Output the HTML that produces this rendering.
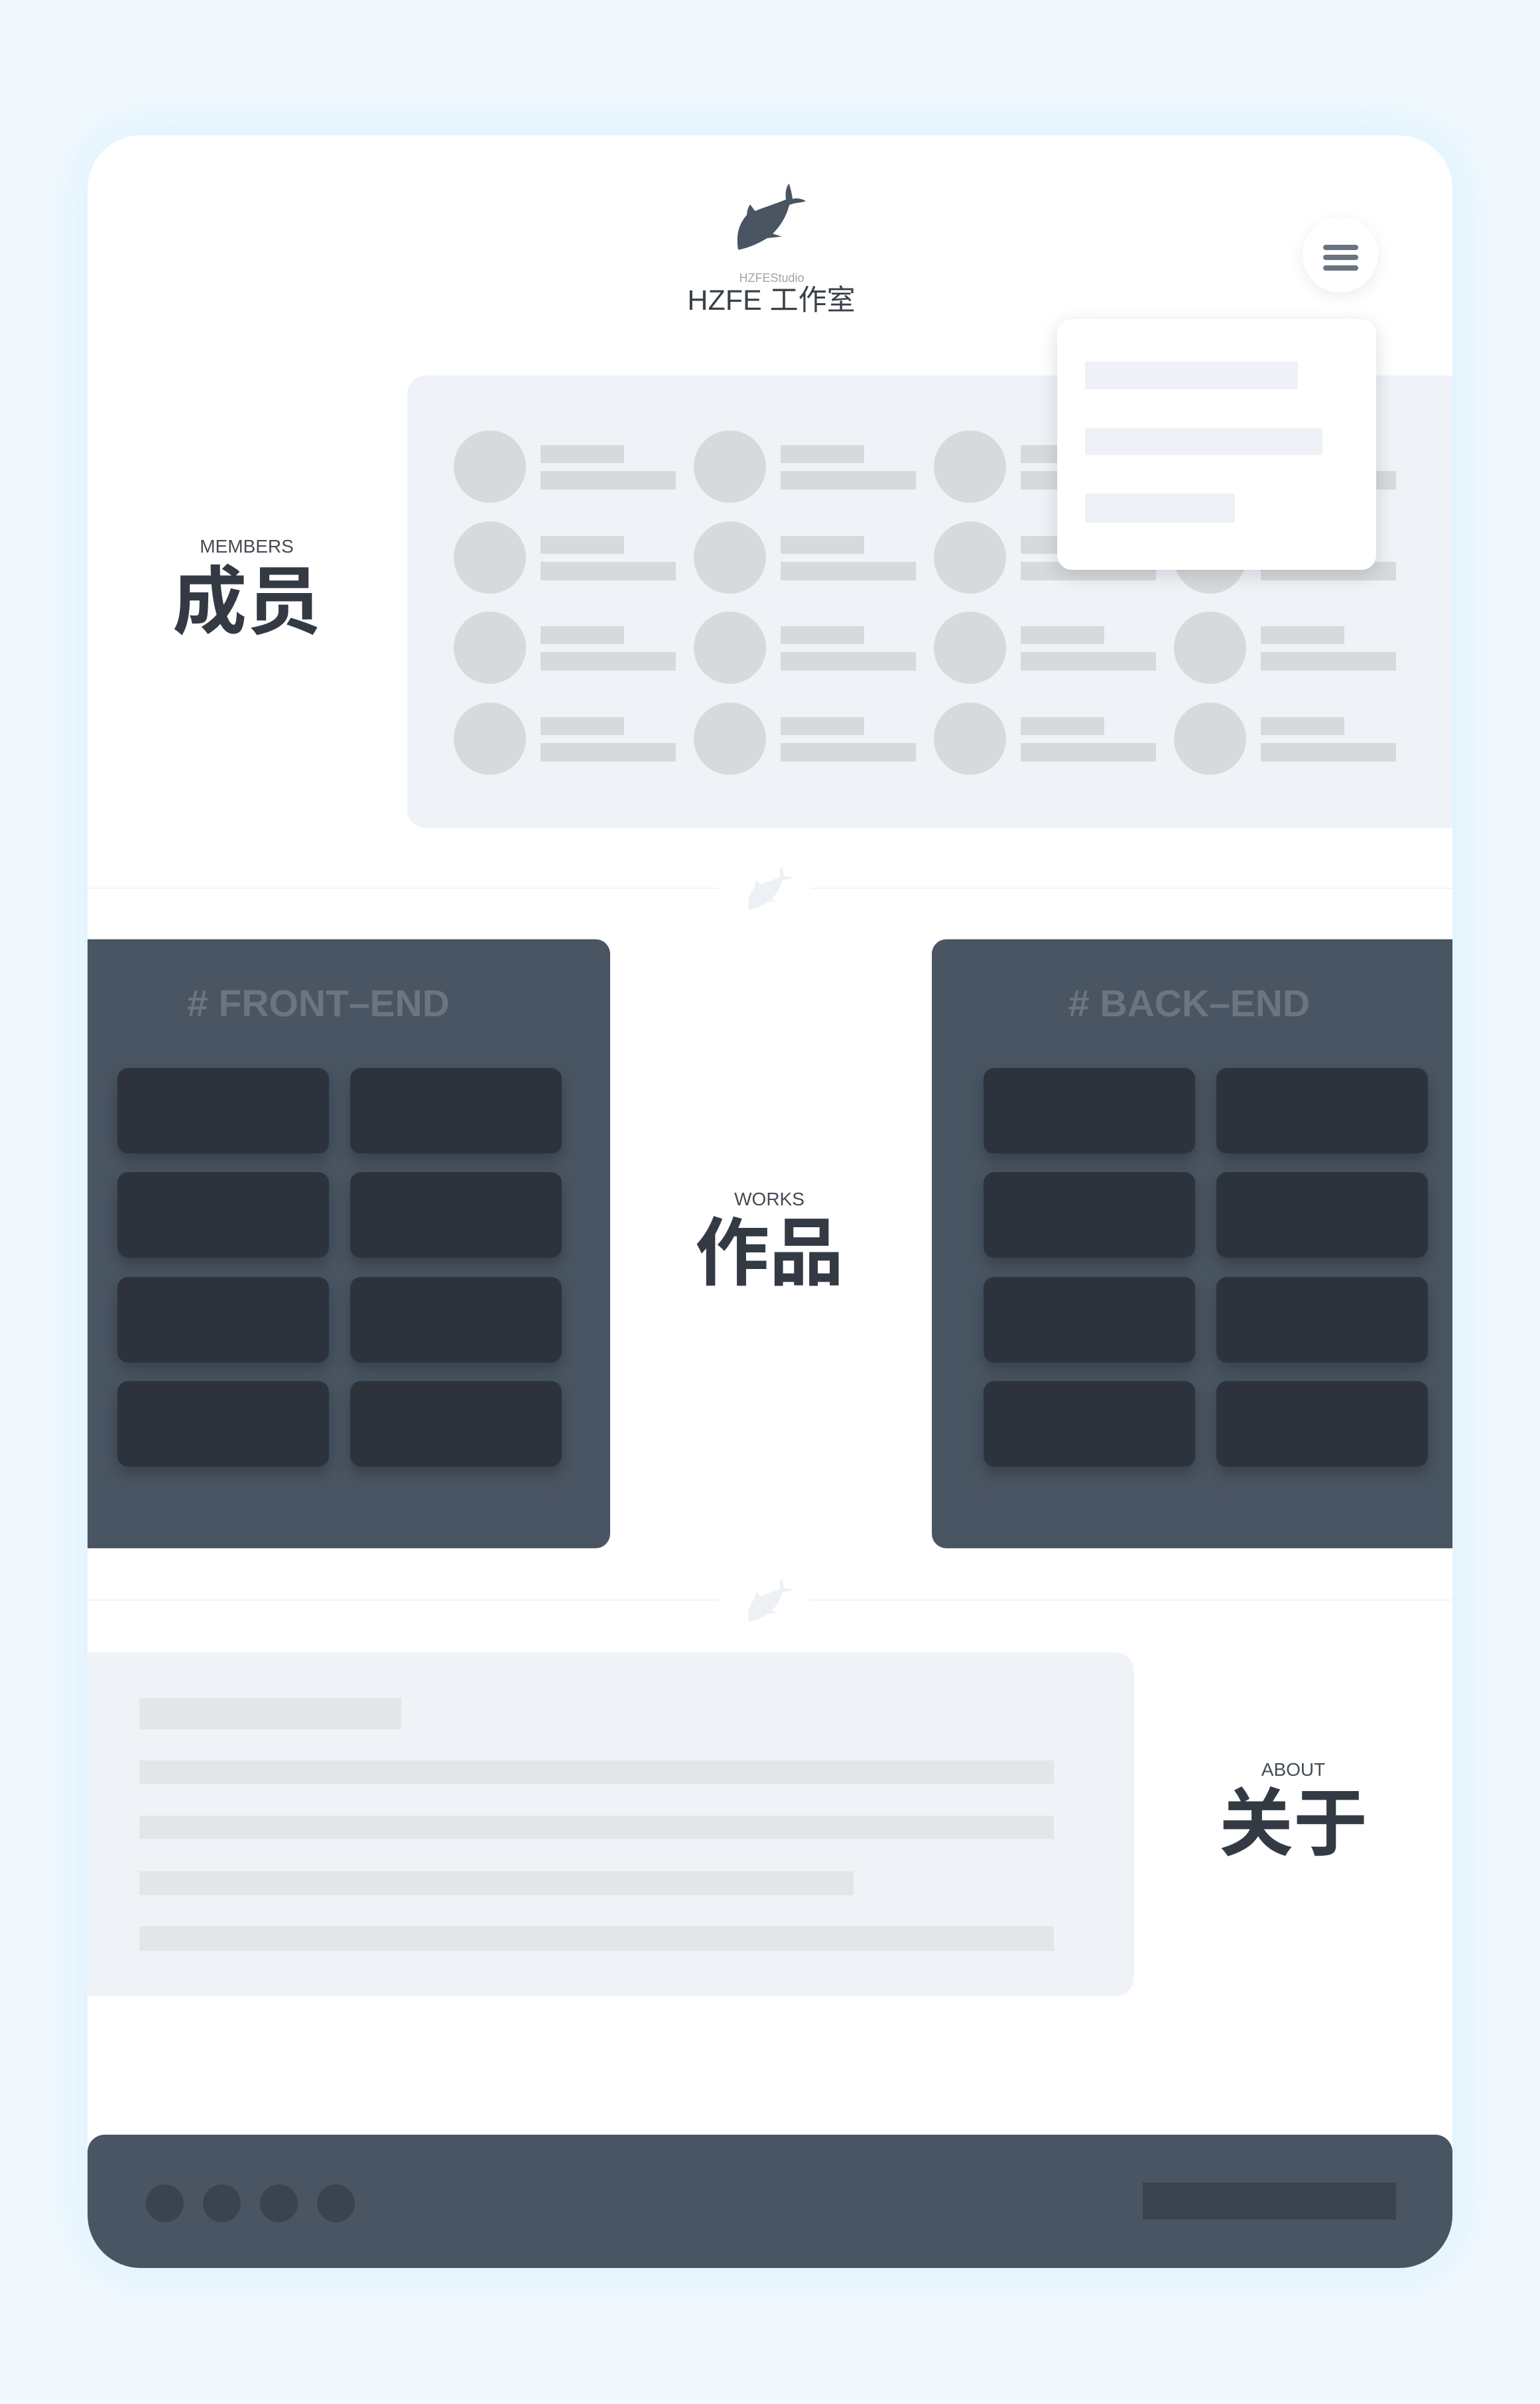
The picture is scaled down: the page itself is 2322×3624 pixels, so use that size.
<!DOCTYPE html>
<html><head><meta charset="utf-8">
<style>
*{margin:0;padding:0;box-sizing:border-box}
html,body{width:2322px;height:3624px;overflow:hidden;background:#f2f9fe;font-family:"Liberation Sans","Noto Sans CJK SC",sans-serif}
.abs{position:absolute}
.card{position:absolute;left:132px;top:204px;width:2058px;height:3215px;background:#fff;border-radius:80px;overflow:hidden;box-shadow:0 0 70px 20px rgba(214,239,255,.7)}
.t{position:absolute;line-height:1;white-space:nowrap}
.circ{position:absolute;width:109px;height:109px;border-radius:50%;background:#d7dadd}
.bar{position:absolute;background:#d7dadd}
.tile{position:absolute;width:319px;height:129px;border-radius:16px;background:#2d333c;box-shadow:0 10px 22px rgba(20,25,32,.35)}
.lbl{font-size:28px;color:#454b54;font-weight:300}
</style></head><body>
<div class="card">
<svg class="abs" style="left:978px;top:70px" width="107" height="105" viewBox="330 100 320 315">
<path fill="#4a5563" d="M340,408 C380,400 420,385 470,355 L535,348 C520,342 505,338 495,335 C530,300 555,260 570,205 C590,195 620,195 645,188 C625,175 600,172 585,178 C580,150 575,125 568,108 C555,125 550,155 555,180 C520,195 460,215 415,232 L393,203 C383,215 378,235 378,250 C350,280 335,320 335,360 C335,385 336,400 340,408 Z"/>
</svg>
<div class="t" style="left:958px;top:206px;width:147px;text-align:center;font-size:18px;color:#a0a4a9">HZFEStudio</div>
<div class="t" style="left:896px;top:228px;width:270px;text-align:center;font-size:43px;color:#3a4049">HZFE 工作室</div>
<div class="abs" style="left:1832px;top:123px;width:114px;height:114px;border-radius:50%;background:#fff;box-shadow:0 6px 24px rgba(0,0,0,.08)"></div>
<div class="abs" style="left:1863px;top:165px;width:53px;height:8px;border-radius:4px;background:#6b7580"></div>
<div class="abs" style="left:1863px;top:180px;width:53px;height:8px;border-radius:4px;background:#6b7580"></div>
<div class="abs" style="left:1863px;top:196px;width:53px;height:8px;border-radius:4px;background:#6b7580"></div>

<div class="t lbl" style="left:140px;top:606px;width:200px;text-align:center">MEMBERS</div>
<div class="t" style="left:110px;top:648px;width:260px;text-align:center;font-size:112px;font-weight:bold;color:#333a44">成员</div>
<div class="abs" style="left:482px;top:362px;width:1700px;height:682px;background:#eff2f7;border-radius:28px 0 0 28px"></div>

<div class="abs" style="left:0;top:1134px;width:951px;height:2px;background:#f1f3f6"></div>
<div class="abs" style="left:1090px;top:1134px;width:968px;height:2px;background:#f1f3f6"></div>
<svg class="abs" style="left:995px;top:1101px" width="70" height="68" viewBox="330 100 320 315"><path fill="#edf0f4" d="M340,408 C380,400 420,385 470,355 L535,348 C520,342 505,338 495,335 C530,300 555,260 570,205 C590,195 620,195 645,188 C625,175 600,172 585,178 C580,150 575,125 568,108 C555,125 550,155 555,180 C520,195 460,215 415,232 L393,203 C383,215 378,235 378,250 C350,280 335,320 335,360 C335,385 336,400 340,408 Z"/></svg>

<div class="abs" style="left:0;top:1212px;width:788px;height:918px;background:#4a5563;border-radius:0 22px 22px 0"></div>
<div class="t" style="left:150px;top:1281px;width:420px;font-size:57px;font-weight:bold;color:#6b7580">#&nbsp;FRONT–END</div>
<div class="tile" style="left:45px;top:1406px"></div><div class="tile" style="left:396px;top:1406px"></div>
<div class="tile" style="left:45px;top:1563px"></div><div class="tile" style="left:396px;top:1563px"></div>
<div class="tile" style="left:45px;top:1721px"></div><div class="tile" style="left:396px;top:1721px"></div>
<div class="tile" style="left:45px;top:1878px"></div><div class="tile" style="left:396px;top:1878px"></div>

<div class="abs" style="left:1273px;top:1212px;width:785px;height:918px;background:#4a5563;border-radius:22px 0 0 22px"></div>
<div class="t" style="left:1451px;top:1281px;width:420px;text-align:center;font-size:57px;font-weight:bold;color:#6b7580">#&nbsp;BACK–END</div>
<div class="tile" style="left:1351px;top:1406px"></div><div class="tile" style="left:1702px;top:1406px"></div>
<div class="tile" style="left:1351px;top:1563px"></div><div class="tile" style="left:1702px;top:1563px"></div>
<div class="tile" style="left:1351px;top:1721px"></div><div class="tile" style="left:1702px;top:1721px"></div>
<div class="tile" style="left:1351px;top:1878px"></div><div class="tile" style="left:1702px;top:1878px"></div>

<div class="t lbl" style="left:928px;top:1590px;width:200px;text-align:center">WORKS</div>
<div class="t" style="left:898px;top:1630px;width:260px;text-align:center;font-size:112px;font-weight:bold;color:#333a44">作品</div>

<div class="abs" style="left:0;top:2207px;width:951px;height:2px;background:#f1f3f6"></div>
<div class="abs" style="left:1090px;top:2207px;width:968px;height:2px;background:#f1f3f6"></div>
<svg class="abs" style="left:995px;top:2174px" width="70" height="68" viewBox="330 100 320 315"><path fill="#edf0f4" d="M340,408 C380,400 420,385 470,355 L535,348 C520,342 505,338 495,335 C530,300 555,260 570,205 C590,195 620,195 645,188 C625,175 600,172 585,178 C580,150 575,125 568,108 C555,125 550,155 555,180 C520,195 460,215 415,232 L393,203 C383,215 378,235 378,250 C350,280 335,320 335,360 C335,385 336,400 340,408 Z"/></svg>

<div class="abs" style="left:0;top:2287px;width:1578px;height:518px;background:#eff2f7;border-radius:0 28px 28px 0"></div>
<div class="abs" style="left:78px;top:2356px;width:395px;height:47px;background:#e2e6e9"></div>
<div class="abs" style="left:78px;top:2450px;width:1379px;height:35px;background:#e2e6e9"></div>
<div class="abs" style="left:78px;top:2533px;width:1379px;height:35px;background:#e2e6e9"></div>
<div class="abs" style="left:78px;top:2617px;width:1077px;height:36px;background:#e2e6e9"></div>
<div class="abs" style="left:78px;top:2700px;width:1379px;height:37px;background:#e2e6e9"></div>
<div class="t lbl" style="left:1718px;top:2450px;width:200px;text-align:center">ABOUT</div>
<div class="t" style="left:1688px;top:2490px;width:260px;text-align:center;font-size:112px;font-weight:bold;color:#333a44">关于</div>

<div class="abs" style="left:0;top:3014px;width:2058px;height:201px;background:#4a5563;border-radius:26px 26px 0 0"></div>
<div class="abs" style="left:88px;top:3089px;width:57px;height:57px;border-radius:50%;background:#3a434e"></div>
<div class="abs" style="left:174px;top:3089px;width:57px;height:57px;border-radius:50%;background:#3a434e"></div>
<div class="abs" style="left:260px;top:3089px;width:57px;height:57px;border-radius:50%;background:#3a434e"></div>
<div class="abs" style="left:346px;top:3089px;width:57px;height:57px;border-radius:50%;background:#3a434e"></div>
<div class="abs" style="left:1591px;top:3086px;width:382px;height:56px;background:#3a434e"></div>

<div class="circ" style="left:552px;top:445px"></div><div class="bar" style="left:683px;top:467px;width:126px;height:27px"></div><div class="bar" style="left:683px;top:506px;width:204px;height:28px"></div>
<div class="circ" style="left:914px;top:445px"></div><div class="bar" style="left:1045px;top:467px;width:126px;height:27px"></div><div class="bar" style="left:1045px;top:506px;width:204px;height:28px"></div>
<div class="circ" style="left:1276px;top:445px"></div><div class="bar" style="left:1407px;top:467px;width:126px;height:27px"></div><div class="bar" style="left:1407px;top:506px;width:204px;height:28px"></div>
<div class="circ" style="left:1638px;top:445px"></div><div class="bar" style="left:1769px;top:467px;width:126px;height:27px"></div><div class="bar" style="left:1769px;top:506px;width:204px;height:28px"></div>

<div class="circ" style="left:552px;top:582px"></div><div class="bar" style="left:683px;top:604px;width:126px;height:27px"></div><div class="bar" style="left:683px;top:643px;width:204px;height:28px"></div>
<div class="circ" style="left:914px;top:582px"></div><div class="bar" style="left:1045px;top:604px;width:126px;height:27px"></div><div class="bar" style="left:1045px;top:643px;width:204px;height:28px"></div>
<div class="circ" style="left:1276px;top:582px"></div><div class="bar" style="left:1407px;top:604px;width:126px;height:27px"></div><div class="bar" style="left:1407px;top:643px;width:204px;height:28px"></div>
<div class="circ" style="left:1638px;top:582px"></div><div class="bar" style="left:1769px;top:604px;width:126px;height:27px"></div><div class="bar" style="left:1769px;top:643px;width:204px;height:28px"></div>

<div class="circ" style="left:552px;top:718px"></div><div class="bar" style="left:683px;top:740px;width:126px;height:27px"></div><div class="bar" style="left:683px;top:779px;width:204px;height:28px"></div>
<div class="circ" style="left:914px;top:718px"></div><div class="bar" style="left:1045px;top:740px;width:126px;height:27px"></div><div class="bar" style="left:1045px;top:779px;width:204px;height:28px"></div>
<div class="circ" style="left:1276px;top:718px"></div><div class="bar" style="left:1407px;top:740px;width:126px;height:27px"></div><div class="bar" style="left:1407px;top:779px;width:204px;height:28px"></div>
<div class="circ" style="left:1638px;top:718px"></div><div class="bar" style="left:1769px;top:740px;width:126px;height:27px"></div><div class="bar" style="left:1769px;top:779px;width:204px;height:28px"></div>

<div class="circ" style="left:552px;top:855px"></div><div class="bar" style="left:683px;top:877px;width:126px;height:27px"></div><div class="bar" style="left:683px;top:916px;width:204px;height:28px"></div>
<div class="circ" style="left:914px;top:855px"></div><div class="bar" style="left:1045px;top:877px;width:126px;height:27px"></div><div class="bar" style="left:1045px;top:916px;width:204px;height:28px"></div>
<div class="circ" style="left:1276px;top:855px"></div><div class="bar" style="left:1407px;top:877px;width:126px;height:27px"></div><div class="bar" style="left:1407px;top:916px;width:204px;height:28px"></div>
<div class="circ" style="left:1638px;top:855px"></div><div class="bar" style="left:1769px;top:877px;width:126px;height:27px"></div><div class="bar" style="left:1769px;top:916px;width:204px;height:28px"></div>

<div class="abs" style="left:1462px;top:277px;width:481px;height:378px;background:#fff;border-radius:22px;box-shadow:0 8px 30px rgba(0,0,0,.14)">
<div class="abs" style="left:42px;top:64px;width:321px;height:42px;background:#eef1f5"></div>
<div class="abs" style="left:42px;top:164px;width:358px;height:41px;background:#eef1f5"></div>
<div class="abs" style="left:42px;top:263px;width:226px;height:44px;background:#eef1f5"></div>
</div>
</div>
</body></html>
